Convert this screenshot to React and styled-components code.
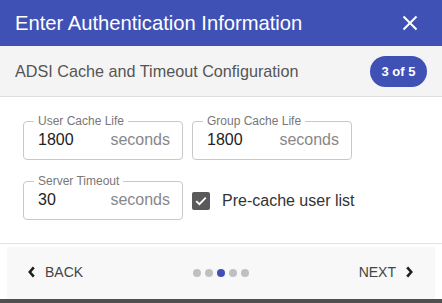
import styled, { createGlobalStyle } from "styled-components";

const Global = createGlobalStyle`
  html, body {
    margin: 0;
    padding: 0;
    background: #505050;
  }
  body {
    font-family: "Liberation Sans", Arial, sans-serif;
  }
`;

const Dialog = styled.div`
  width: 442px;
  height: 299px;
  background: #fff;
  display: flex;
  flex-direction: column;
`;

const Header = styled.div`
  height: 46px;
  background: #3f51b5;
  color: #fff;
  display: flex;
  align-items: center;
  justify-content: space-between;
  padding: 0 24px 0 15px;
`;

const Title = styled.div`
  font-size: 20.2px;
`;

const CloseButton = styled.div`
  width: 16px;
  height: 16px;
  display: flex;
  cursor: pointer;
`;

const SubHeader = styled.div`
  height: 50px;
  background: #f4f4f4;
  border-bottom: 1px solid #dedede;
  display: flex;
  align-items: center;
  justify-content: space-between;
  padding: 0 15px;
`;

const SubTitle = styled.div`
  font-size: 16.2px;
  color: #555;
`;

const Badge = styled.div`
  height: 31px;
  width: 57px;
  border-radius: 16px;
  background: #3f51b5;
  color: #fff;
  font-size: 13px;
  font-weight: bold;
  display: flex;
  align-items: center;
  justify-content: center;
`;

const Body = styled.div`
  flex: 1;
  padding: 18px 23px 0;
  display: grid;
  grid-template-columns: 160px 160px;
  column-gap: 9px;
  row-gap: 15px;
  align-content: start;
`;

const Field = styled.fieldset`
  margin: 0;
  padding: 0 12px 0 14px;
  border: 1px solid #c8c8c8;
  border-radius: 4px;
  min-width: 0;
`;

const Legend = styled.legend`
  font-size: 12px;
  line-height: 12px;
  color: #777;
  padding: 0 4px;
  margin-left: -4px;
`;

const FieldRow = styled.div`
  height: 26px;
  padding-bottom: 6px;
  display: flex;
  align-items: center;
  justify-content: space-between;
  font-size: 16px;
`;

const Value = styled.span`
  color: #222;
`;

const Suffix = styled.span`
  color: #888;
`;

const CheckRow = styled.label`
  margin-top: 6px;
  display: flex;
  align-items: center;
  gap: 12px;
  font-size: 16px;
  color: #333;
  white-space: nowrap;
  cursor: pointer;
`;

const CheckBox = styled.span`
  width: 18px;
  height: 18px;
  flex-shrink: 0;
  border-radius: 2px;
  background: ${(p) => (p.checked ? "#5a5a5a" : "#fff")};
  display: flex;
  align-items: center;
  justify-content: center;
`;

const Footer = styled.div`
  border-top: 1px solid #e2e2e2;
  padding: 3px 7px 0;
`;

const ActionBar = styled.div`
  height: 52px;
  background: #f8f8f8;
  display: flex;
  align-items: center;
  padding: 0 22px 0 21px;
`;

const NavButton = styled.div`
  flex: 1;
  display: flex;
  align-items: center;
  justify-content: ${(p) => (p.right ? "flex-end" : "flex-start")};
  gap: 10px;
  font-size: 14px;
  color: #444;
  cursor: pointer;
  padding-bottom: 3px;
`;

const Dots = styled.div`
  display: flex;
  gap: 4px;
`;

const Dot = styled.span`
  width: 8px;
  height: 8px;
  border-radius: 50%;
  background: ${(p) => (p.active ? "#3f51b5" : "#c0c0c0")};
`;

const fields = [
  { label: "User Cache Life", value: "1800" },
  { label: "Group Cache Life", value: "1800" },
  { label: "Server Timeout", value: "30" },
];

const Chevron = ({ dir }) => (
  <svg width="7" height="12" viewBox="0 0 7 12">
    <path
      d={dir === "left" ? "M5.8 1.4 L1.8 6 L5.8 10.6" : "M1.2 1.4 L5.2 6 L1.2 10.6"}
      fill="none"
      stroke="#1e1e1e"
      strokeWidth="2.6"
    />
  </svg>
);

export default function App() {
  const step = 3;
  return (
    <>
      <Global />
      <Dialog>
        <Header>
          <Title>Enter Authentication Information</Title>
          <CloseButton>
            <svg width="16" height="16" viewBox="0 0 16 16">
              <path d="M1.5 1.5 L14.5 14.5 M14.5 1.5 L1.5 14.5" stroke="#fff" strokeWidth="2" />
            </svg>
          </CloseButton>
        </Header>
        <SubHeader>
          <SubTitle>ADSI Cache and Timeout Configuration</SubTitle>
          <Badge>{step} of 5</Badge>
        </SubHeader>
        <Body>
          {fields.map((f) => (
            <Field key={f.label}>
              <Legend>{f.label}</Legend>
              <FieldRow>
                <Value>{f.value}</Value>
                <Suffix>seconds</Suffix>
              </FieldRow>
            </Field>
          ))}
          <CheckRow>
            <CheckBox checked>
              <svg width="14" height="14" viewBox="0 0 14 14">
                <path d="M2.2 7.2 L5.4 10.2 L11.8 3.6" fill="none" stroke="#fff" strokeWidth="1.8" />
              </svg>
            </CheckBox>
            Pre-cache user list
          </CheckRow>
        </Body>
        <Footer>
          <ActionBar>
            <NavButton>
              <Chevron dir="left" />
              BACK
            </NavButton>
            <Dots>
              {[1, 2, 3, 4, 5].map((n) => (
                <Dot key={n} active={n === step} />
              ))}
            </Dots>
            <NavButton right>
              NEXT
              <Chevron dir="right" />
            </NavButton>
          </ActionBar>
        </Footer>
      </Dialog>
    </>
  );
}
